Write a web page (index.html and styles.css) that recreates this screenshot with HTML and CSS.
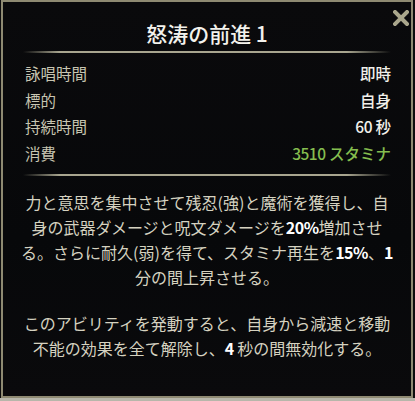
FILE: index.html
```html
<!DOCTYPE html>
<html lang="ja">
<head>
<meta charset="utf-8">
<link rel="stylesheet" href="styles.css">
</head>
<body>
<div class="frame">
  <svg class="close" viewBox="0 0 16 16" width="16" height="16"><path d="M2 2 L14 14 M14 2 L2 14" stroke="#a9a68c" stroke-width="4" stroke-linecap="square"/></svg>
  <div class="header"><h1 class="title">怒涛の前進 1</h1></div>
  <div class="divider"></div>
  <div class="rows">
    <div class="row"><span class="label">詠唱時間</span><span class="value">即時</span></div>
    <div class="row"><span class="label">標的</span><span class="value">自身</span></div>
    <div class="row"><span class="label">持続時間</span><span class="value"><span class="num">60</span> 秒</span></div>
    <div class="row"><span class="label">消費</span><span class="value green"><span class="num">3510</span> スタミナ</span></div>
  </div>
  <div class="divider second"></div>
  <div class="desc">
    <p class="para">力と意思を集中させて残忍(強)と魔術を獲得し、自<br>身の武器ダメージと呪文ダメージを<b class="hl">20%</b>増加させ<br>る。さらに耐久(弱)を得て、スタミナ再生を<b class="hl">15%</b>、<b class="hl">1</b><br>分の間上昇させる。</p>
    <p class="para">このアビリティを発動すると、自身から減速と移動<br>不能の効果を全て解除し、<b class="hl">4</b> 秒の間無効化する。</p>
  </div>
</div>
<div class="strip"></div>
</body>
</html>
```
FILE: styles.css
```css
html, body {
  margin: 0;
  padding: 0;
  background: #0c0c0d;
}
body {
  width: 415px;
  height: 401px;
  overflow: hidden;
  font-family: "Noto Sans CJK JP", "Noto Sans", sans-serif;
}
.frame {
  position: relative;
  margin-left: 1px;
  width: 408px;
  height: 394px;
  border: 2px solid #8e8a72;
  background: linear-gradient(180deg, #0a0a0c 0%, #07080a 60%, #0a0a0c 100%);
}
.strip {
  height: 5px;
  background: #b7b6aa;
}
.close {
  position: absolute;
  top: 8px;
  right: 2px;
}
.header {
  padding-top: 18px;
  text-align: center;
}
.title {
  margin: 0;
  font-size: 21px;
  line-height: 26px;
  font-weight: 500;
  color: #f3f2ec;
}
.divider {
  margin: 5px 20px 0 20px;
  height: 2px;
  background: linear-gradient(90deg, rgba(168,165,143,0) 0%, #a8a58f 10%, #a8a58f 88%, rgba(168,165,143,0) 100%);
}
.divider.second {
  margin-top: 8px;
}
.rows {
  padding: 7px 20px 0 22px;
}
.row {
  display: flex;
  justify-content: space-between;
  align-items: center;
  height: 26.5px;
  font-size: 15.5px;
}
.label {
  color: #c7c5b1;
}
.value {
  color: #f1f0ea;
  font-weight: 500;
}
.value.green {
  color: #85bd4f;
}
.num {
  letter-spacing: -0.5px;
}
.desc {
  padding: 14px 10px 0 10px;
  text-align: center;
  color: #d5d2c0;
  font-size: 16px;
  line-height: 25px;
  white-space: nowrap;
}
.para {
  margin: 0 0 21px 0;
}
.hl {
  color: #ffffff;
  font-weight: 700;
  letter-spacing: -0.5px;
}
```
